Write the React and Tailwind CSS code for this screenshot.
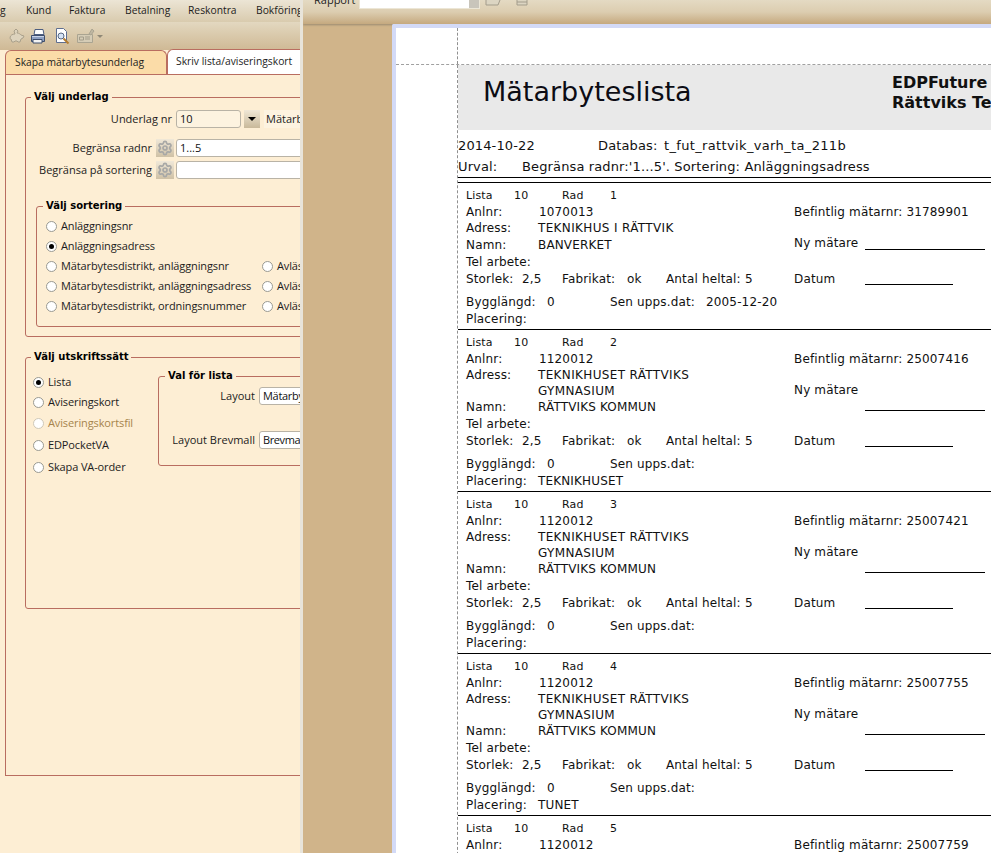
import React from 'react';
import { Settings } from 'lucide-react';

const UI = { fontFamily: '"Open Sans","Noto Sans",sans-serif' };

function Legend({ children, ml = 'ml-[5px]' }) {
  return <legend className={`${ml} px-[3px] text-[10px] font-bold leading-[14px] text-black whitespace-nowrap`} style={{ fontFamily: '"DejaVu Sans",sans-serif' }}>{children}</legend>;
}

function Radio({ checked, disabled }) {
  return (
    <span className={`flex h-[11px] w-[11px] shrink-0 items-center justify-center rounded-full border bg-white ${disabled ? 'border-[#cfc8b8] bg-[#fdf3e0]' : 'border-[#9a9a92]'}`}>
      {checked && <span className="h-[5px] w-[5px] rounded-full bg-black" />}
    </span>
  );
}

function RadioRow({ label, checked, disabled }) {
  return (
    <div className="flex h-[20px] items-center gap-[4px] whitespace-nowrap">
      <Radio checked={checked} disabled={disabled} />
      <span className={`text-[11px] tracking-[-0.12px] ${disabled ? 'text-[#a6844c]' : 'text-[#1c1c1c]'}`}>{label}</span>
    </div>
  );
}

function Gear() {
  return (
    <span className="flex h-[18px] w-[18px] shrink-0 items-center justify-center bg-gradient-to-b from-[#f0e8d8] to-[#cfc1a6]">
      <Settings size={16} strokeWidth={2.6} className="text-[#a8a8a6]" />
    </span>
  );
}

function Inp({ className = '', children }) {
  return <div className={`flex items-center rounded-[3px] border border-[#b9b3a6] pl-[3px] text-[11px] text-[#111] ${className}`}>{children}</div>;
}

function Left() {
  return (
    <div className="flex h-full w-[300px] shrink-0 flex-col overflow-hidden bg-[#fdeed4] text-[#1c1c1c]" style={UI}>
      <div className="relative flex h-[22px] shrink-0 items-center whitespace-nowrap bg-gradient-to-b from-[#ece5d5] to-[#d9cbae] pl-[26px] text-[10.3px]">
        <span className="absolute left-0">g</span>
        <span className="w-[43px] shrink-0">Kund</span>
        <span className="w-[56px] shrink-0">Faktura</span>
        <span className="w-[63px] shrink-0">Betalning</span>
        <span className="w-[68px] shrink-0">Reskontra</span>
        <span className="shrink-0">Bokföring</span>
      </div>
      <div className="flex h-[28px] shrink-0 items-center gap-[5px] bg-gradient-to-b from-[#e3d8c0] to-[#cfb995] pl-[8px]">
        <svg width="17" height="17" viewBox="0 0 17 17"><path d="M2 10c0-3 3-4 5-4l-1-3 2-2 2 2-1 2c2 0 3 1 4 2l3 1-1 2-2 1-1 3h-2l-1-1H7l-1 1H4l-1-3c-1 0-1-1-1-1z" fill="#ddd3bd" stroke="#a9a08b" /></svg>
        <svg width="16" height="15" viewBox="0 0 16 15"><path d="M5 .5h8l1 5H4z" fill="#fff" stroke="#4d5e80" /><path d="M1.500 6.500h13v6h-13z" fill="#8ea0c2" stroke="#3f4e6c" /><path d="M3 10.500h9v3.500H3z" fill="#f3f3f3" stroke="#3f4e6c" /><path d="M2 7.500h12" stroke="#c8d3e8" /></svg>
        <svg className="ml-[3px]" width="17" height="19" viewBox="0 0 17 19"><path d="M2.500 1.500h7l3 3v11h-10z" fill="#fff" stroke="#5f6f90" /><circle cx="7" cy="9" r="3" fill="#d6e4f6" stroke="#566682" /><path d="M9.500 11.500l5 5" stroke="#b47c30" strokeWidth="2" /></svg>
        <span className="flex items-center gap-[1px]">
          <svg width="20" height="16" viewBox="0 0 20 16"><path d="M1.500 6.500h15v8h-15z" fill="#d5ccb6" stroke="#aaa491" /><path d="M3.500 9h4v3h-4zM9 9h5M9 11h5" stroke="#a39c8a" fill="none" /><path d="M13 6l3-5 2 2-3 4z" fill="#bfb7a2" stroke="#aaa491" /></svg>
          <span className="h-0 w-0 border-x-[3px] border-t-[3px] border-x-transparent border-t-[#8f8877]" />
        </span>
      </div>
      <div className="flex h-[24px] shrink-0 items-end pl-[5px] text-[10.3px]">
        <div className="flex h-[24px] w-[162px] items-center rounded-t-[6px] border border-b-0 border-[#b96d60] bg-[#fbdca8] pl-[9px]">Skapa mätarbytesunderlag</div>
        <div className="flex h-[25px] flex-1 items-center rounded-tl-[6px] border-l border-t border-[#b96d60] bg-white pl-[8px] whitespace-nowrap">Skriv lista/aviseringskort</div>
      </div>
      <div className="ml-[5px] h-[702px] w-[300px] shrink-0 border border-[#b96d60] pl-[19px] pt-[15px]">
        <fieldset className="h-[247px] w-[300px] rounded-[3px] border border-[#b96d60]">
          <Legend>Välj underlag</Legend>
          <div className="pl-[10px]">
            <div className="mt-[6px] flex h-[18px] items-center">
              <span className="w-[136px] text-right text-[11px] whitespace-nowrap">Underlag nr</span>
              <Inp className="ml-[4px] h-[18px] w-[65px] bg-[#fdf3e0]">10</Inp>
              <span className="ml-[3px] flex h-[18px] w-[16px] items-center justify-center bg-gradient-to-b from-[#efe7d6] to-[#c9b99a]"><span className="h-0 w-0 border-x-[4px] border-t-[4px] border-x-transparent border-t-black" /></span>
              <span className="ml-[4px] flex h-[18px] flex-1 items-center bg-[#fdf3e0] pl-[2px] text-[11px]">Mätarb</span>
            </div>
            <div className="mt-[11px] flex h-[18px] items-center">
              <span className="w-[116px] text-right text-[11px] whitespace-nowrap">Begränsa radnr</span>
              <span className="ml-[4px]"><Gear /></span>
              <Inp className="ml-[2px] h-[18px] flex-1 bg-white">1...5</Inp>
            </div>
            <div className="mt-[4px] flex h-[18px] items-center">
              <span className="w-[116px] text-right text-[11px] whitespace-nowrap">Begränsa på sortering</span>
              <span className="ml-[4px]"><Gear /></span>
              <Inp className="ml-[2px] h-[18px] flex-1 bg-white" />
            </div>
            <fieldset className="mt-[20px] h-[128px] rounded-[3px] border border-[#b96d60]">
              <Legend ml="ml-[6px]">Välj sortering</Legend>
              <div className="flex pl-[9px] pt-[3px]">
                <div className="w-[216px] shrink-0">
                  <RadioRow label="Anläggningsnr" />
                  <RadioRow label="Anläggningsadress" checked />
                  <RadioRow label="Mätarbytesdistrikt, anläggningsnr" />
                  <RadioRow label="Mätarbytesdistrikt, anläggningsadress" />
                  <RadioRow label="Mätarbytesdistrikt, ordningsnummer" />
                </div>
                <div className="pt-[40px]">
                  <RadioRow label="Avläs" />
                  <RadioRow label="Avläs" />
                  <RadioRow label="Avläs" />
                </div>
              </div>
            </fieldset>
          </div>
        </fieldset>
        <fieldset className="mt-[13px] h-[259px] w-[300px] rounded-[3px] border border-[#b96d60]">
          <Legend>Välj utskriftssätt</Legend>
          <div className="flex items-start pl-[7px]">
            <div className="w-[125px] shrink-0 pt-[8px]">
              <div className="h-[20px]"><RadioRow label="Lista" checked /></div>
              <div className="h-[21px]"><RadioRow label="Aviseringskort" /></div>
              <div className="h-[22px]"><RadioRow label="Aviseringskortsfil" disabled /></div>
              <div className="h-[22px]"><RadioRow label="EDPocketVA" /></div>
              <div className="h-[21px]"><RadioRow label="Skapa VA-order" /></div>
            </div>
            <fieldset className="mt-[5px] h-[97px] flex-1 rounded-[3px] border border-[#b96d60]">
              <Legend ml="ml-[6px]">Val för lista</Legend>
              <div className="mt-[4px] flex h-[18px] items-center">
                <span className="w-[96px] text-right text-[11px]">Layout</span>
                <Inp className="ml-[4px] h-[18px] flex-1 bg-white tracking-[-0.3px] whitespace-nowrap">Mätarby</Inp>
              </div>
              <div className="mt-[26px] flex h-[18px] items-center">
                <span className="w-[96px] text-right text-[11px] whitespace-nowrap">Layout Brevmall</span>
                <Inp className="ml-[4px] h-[18px] flex-1 bg-white tracking-[-0.4px] whitespace-nowrap">Brevmall</Inp>
              </div>
            </fieldset>
          </div>
        </fieldset>
      </div>
    </div>
  );
}

function Row({ h, children, cls = '' }) {
  return <div className={`flex items-center whitespace-nowrap ${h} ${cls}`}>{children}</div>;
}

function Record({ no, anl, adr, adr2, namn, bef, sen, plac, last }) {
  return (
    <div className={`flex shrink-0 pl-[8px] text-[12px] tracking-[0.15px] text-[#111] ${adr2 ? 'h-[162px]' : 'h-[147px]'} ${last ? '' : 'border-b border-black'}`}>
      <div className="w-[328px] shrink-0 pt-[5px]">
        <Row h="h-[16px]" cls="text-[11px]"><span className="w-[48px]">Lista</span><span className="w-[48px]">10</span><span className="w-[48px]">Rad</span><span>{no}</span></Row>
        <Row h="h-[16px]"><span className="w-[73px]">Anlnr:</span><span>{anl}</span></Row>
        <Row h="h-[16px]"><span className="w-[72px]">Adress:</span><span className="tracking-[0.35px]">{adr}</span></Row>
        {adr2 && <Row h="h-[15px]"><span className="ml-[72px] tracking-[0.35px]">{adr2}</span></Row>}
        <Row h="h-[17px]"><span className="w-[72px]">Namn:</span><span>{namn}</span></Row>
        <Row h="h-[17px]"><span>Tel arbete:</span></Row>
        <Row h="h-[17px]"><span className="w-[56px]">Storlek:</span><span className="w-[40px]">2,5</span><span className="w-[65px]">Fabrikat:</span><span className="w-[39px]">ok</span><span className="w-[79px]">Antal heltal:</span><span>5</span></Row>
        <Row h="h-[17px]" cls="mt-[6px]"><span className="w-[81px]">Bygglängd:</span><span className="w-[63px]">0</span><span className="w-[96px]">Sen upps.dat:</span><span>{sen}</span></Row>
        <Row h="h-[17px]"><span className="w-[72px]">Placering:</span><span>{plac}</span></Row>
      </div>
      <div className="flex-1 pt-[21px]">
        <Row h="h-[16px]"><span>Befintlig mätarnr: {bef}</span></Row>
        <div className={`mt-[15px] flex items-start ${adr2 ? 'h-[49px]' : 'h-[34px]'}`}>
          <span className="h-[16px] w-[71px] leading-[16px]">Ny mätare</span>
          <span className={`w-[120px] border-b border-black ${adr2 ? 'h-[29px]' : 'h-[15px]'}`} />
        </div>
        <div className="flex items-start">
          <span className="mt-[2px] h-[17px] w-[71px] leading-[17px]">Datum</span>
          <span className="h-[16px] w-[88px] border-b border-black" />
        </div>
      </div>
    </div>
  );
}

function Right() {
  const dj = { fontFamily: '"DejaVu Sans",sans-serif' };
  return (
    <div className="flex h-full flex-1 flex-col overflow-hidden border-l-[3px] border-l-[#e8e4da] bg-[#d0b48a]" style={dj}>
      <div className="flex h-[24px] shrink-0 bg-gradient-to-b from-[#e4dac3] via-[#dccdb0] to-[#c5a97f] pl-[11px] text-[11px] shadow-[0_1px_2px_#9a8a70]">
        <span className="-mt-[7px] h-[14px] leading-[14px] text-[#222]" style={UI}>Rapport</span>
        <span className="ml-[4px] flex h-[9px] w-[121px] justify-end border border-t-0 border-[#ece6d6] bg-white"><span className="w-[10px] bg-[#c9c5bb]" /></span>
        <svg className="ml-[4px]" width="18" height="8" viewBox="0 0 18 8"><path d="M2 0v5h12l2-5" fill="#dcd5c2" stroke="#a39c8b" /></svg>
        <svg className="ml-[13px]" width="16" height="6" viewBox="0 0 16 6"><path d="M2 0v5h10V0M2 2h10" fill="#dcd5c2" stroke="#a39c8b" /></svg>
      </div>
      <div className="ml-[89px] flex-1 overflow-hidden">
        <div className="h-full rounded-tl-[2px] border-l-[4px] border-t-[4px] border-[#d3daf7] bg-white shadow-[-2px_0_2px_#8f8371]">
          <div className="h-[37px] border-b border-dashed border-[#a0a0a0]">
            <div className="ml-[61px] h-full border-l border-dashed border-[#909090]" />
          </div>
          <div className="ml-[61px] h-full border-l border-dashed border-[#909090]">
            <div className="flex h-[65px] items-center justify-between bg-[#e9e9e9] pb-[10px] pl-[25px]">
              <span className="text-[27px] text-[#0c0c14]">Mätarbyteslista</span>
              <div className="w-[99px] overflow-hidden text-[16px] leading-[20px] font-bold whitespace-nowrap text-[#111]"><div>EDPFuture</div><div>Rättviks Teknik</div></div>
            </div>
            <div className="mt-[5px] flex h-[21px] items-center whitespace-nowrap text-[13px] tracking-[0.13px] text-[#111]"><span className="w-[140px]">2014-10-22</span><span className="w-[66px]">Databas:</span><span className="tracking-[0.35px]">t_fut_rattvik_varh_ta_211b</span></div>
            <div className="flex h-[21px] items-center whitespace-nowrap text-[13px] tracking-[0.13px] text-[#111]"><span className="w-[64px]">Urval:</span><span>Begränsa radnr:'1...5'. Sortering: Anläggningsadress</span></div>
            <div className="h-[6px] border-y border-black" />
            <Record no="1" anl="1070013" adr="TEKNIKHUS I RÄTTVIK" namn="BANVERKET" bef="31789901" sen="2005-12-20" plac="" />
            <Record no="2" anl="1120012" adr="TEKNIKHUSET RÄTTVIKS" adr2="GYMNASIUM" namn="RÄTTVIKS KOMMUN" bef="25007416" plac="TEKNIKHUSET" />
            <Record no="3" anl="1120012" adr="TEKNIKHUSET RÄTTVIKS" adr2="GYMNASIUM" namn="RÄTTVIKS KOMMUN" bef="25007421" plac="" />
            <Record no="4" anl="1120012" adr="TEKNIKHUSET RÄTTVIKS" adr2="GYMNASIUM" namn="RÄTTVIKS KOMMUN" bef="25007755" plac="TUNET" />
            <Record no="5" anl="1120012" adr="TEKNIKHUSET RÄTTVIKS" adr2="GYMNASIUM" namn="RÄTTVIKS KOMMUN" bef="25007759" plac="" last />
          </div>
        </div>
      </div>
    </div>
  );
}

export default function App() {
  return (
    <div className="flex h-[853px] w-[991px] overflow-hidden">
      <Left />
      <Right />
    </div>
  );
}
